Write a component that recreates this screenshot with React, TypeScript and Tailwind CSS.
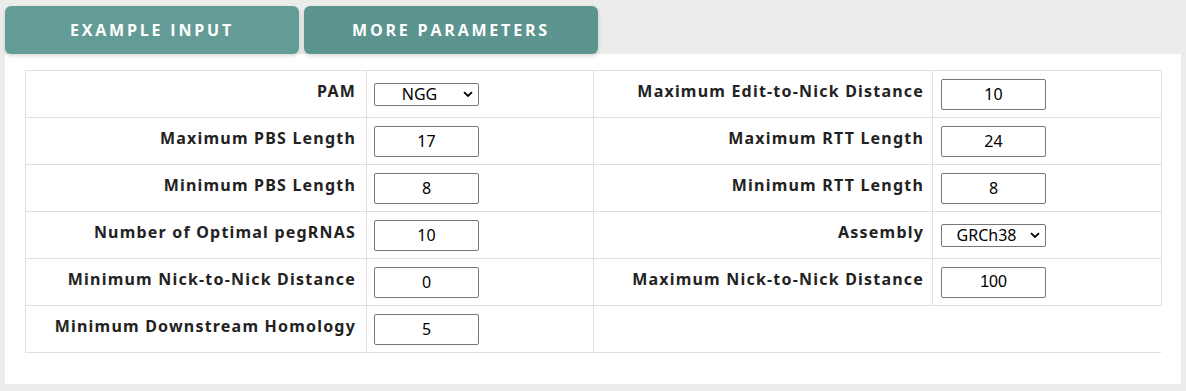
import React from "react";

function Input({ value, font }: { value: string; font?: string }) {
  return (
    <input
      readOnly
      value={value}
      className="w-[105px] h-[31px] border border-[#767676] rounded-[2px] bg-white text-center text-[16px] text-black outline-none"
      style={{ fontFamily: font ?? "'Noto Sans', sans-serif" }}
    />
  );
}

function Select({ value, width }: { value: string; width: number }) {
  return (
    <div
      className="relative h-[23px] border border-[#767676] rounded-[2px] bg-white flex items-center"
      style={{ width }}
    >
      <span className="flex-1 text-center text-[16px] text-black pr-[14px] leading-none" style={{ fontFamily: "'Noto Sans', sans-serif" }}>
        {value}
      </span>
      <svg className="absolute right-[5px] top-[7px]" width="10" height="7" viewBox="0 0 10 7">
        <path d="M1 1.2 L5 5 L9 1.2" fill="none" stroke="#000" strokeWidth="1.8" />
      </svg>
    </div>
  );
}

const labelCls =
  "flex items-center justify-end border-r border-b border-[#dedee3] text-[16px] font-bold text-[#222] tracking-[1.2px] pb-[6px] whitespace-nowrap";

export default function App() {
  const data: [string, React.ReactNode, string, React.ReactNode][] = [
    ["PAM", <Select value="NGG" width={105} />, "Maximum Edit-to-Nick Distance", <Input value="10" />],
    ["Maximum PBS Length", <Input value="17" />, "Maximum RTT Length", <Input value="24" />],
    ["Minimum PBS Length", <Input value="8" />, "Minimum RTT Length", <Input value="8" />],
    ["Number of Optimal pegRNAS", <Input value="10" />, "Assembly", <Select value="GRCh38" width={105} />],
    ["Minimum Nick-to-Nick Distance", <Input value="0" />, "Maximum Nick-to-Nick Distance", <Input value="100" font="'Liberation Sans', Arial, sans-serif" />],
  ];
  return (
    <div className="w-[1186px] h-[391px] bg-[#ecedeb] pt-[6px] px-[5px]" style={{ fontFamily: "'Noto Sans', sans-serif" }}>
      <div className="flex gap-[5px] relative z-10">
        <button className="w-[294px] h-[48px] rounded-[6px] bg-[#639c96] text-white text-[16px] font-bold tracking-[2.8px] shadow-[0_2px_4px_rgba(0,0,0,0.15)]" style={{ fontFamily: "'Open Sans', sans-serif" }}>
          EXAMPLE INPUT
        </button>
        <button className="w-[294px] h-[48px] rounded-[6px] bg-[#5c9490] text-white text-[16px] font-bold tracking-[2.8px] shadow-[0_2px_4px_rgba(0,0,0,0.15)]" style={{ fontFamily: "'Open Sans', sans-serif" }}>
          MORE PARAMETERS
        </button>
      </div>
      <div className="w-[1176px] h-[330px] bg-white pt-[16px] pl-[20px]">
        <div className="grid grid-cols-[341px_227px_339px_229px] auto-rows-[47px] border-t border-l border-[#dedee3] w-[1136px]">
          {data.map(([l1, c1, l2, c2], i) => (
            <React.Fragment key={i}>
              <div className={`${labelCls} pr-[10px]`}>{l1}</div>
              <div className="flex items-center border-r border-b border-[#dedee3] pl-[7px]">{c1}</div>
              <div className={`${labelCls} pr-[8px]`}>{l2}</div>
              <div className="flex items-center border-r border-b border-[#dedee3] pl-[8px]">{c2}</div>
            </React.Fragment>
          ))}
          <div className={`${labelCls} pr-[10px]`}>Minimum Downstream Homology</div>
          <div className="flex items-center border-r border-b border-[#dedee3] pl-[7px]">
            <Input value="5" />
          </div>
          <div className="col-span-2 border-b border-[#dedee3] mr-[1px]"></div>
        </div>
      </div>
    </div>
  );
}
